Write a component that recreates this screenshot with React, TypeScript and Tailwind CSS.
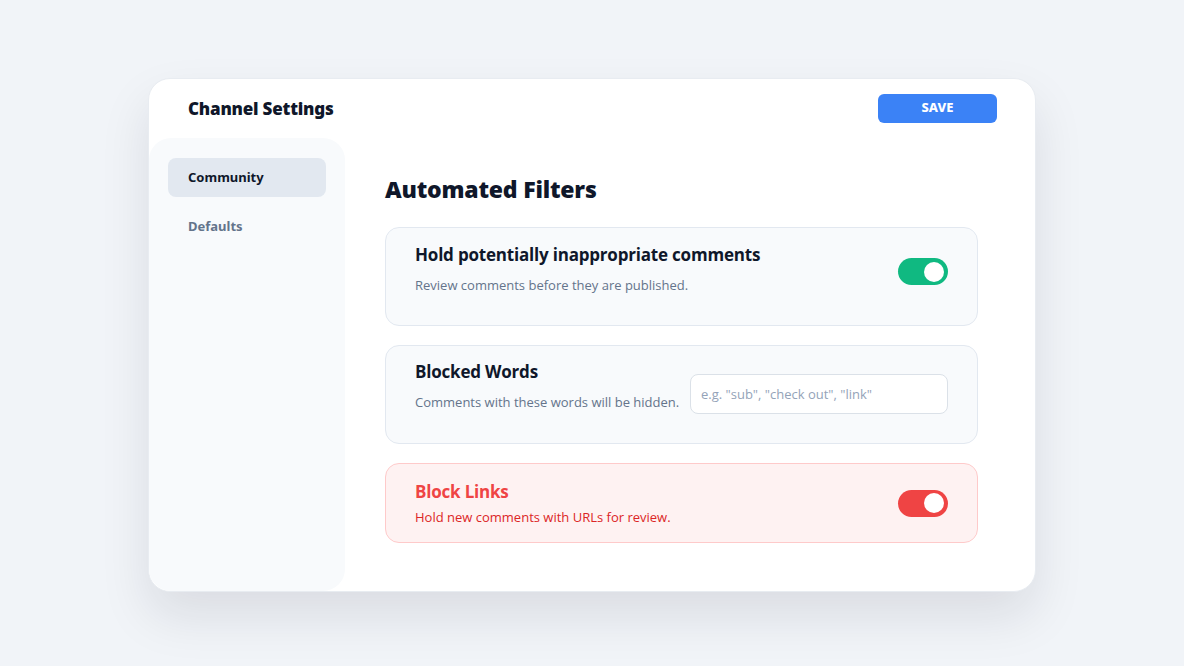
import React from "react";

const BODY = { fontFamily: "'Open Sans', 'Noto Sans', sans-serif" };
const HEAD = { fontFamily: "'Noto Sans', 'Open Sans', sans-serif" };

function Toggle({ color }: { color: string }) {
  return (
    <div className={`flex h-[27px] w-[50px] shrink-0 items-center justify-end rounded-full px-[4px] ${color}`}>
      <div className="h-[20px] w-[20px] rounded-full bg-white" />
    </div>
  );
}

export default function App() {
  return (
    <div className="flex h-[666px] w-full items-start justify-center bg-[#f1f4f8] pt-[78px]" style={BODY}>
      <div className="flex h-[514px] w-[888px] flex-col overflow-hidden rounded-[22px] border border-[#e8ecf1] bg-white shadow-[0_24px_50px_rgba(15,23,42,0.10)]">
        {/* header */}
        <div className="flex h-[59px] shrink-0 items-center justify-between pl-[39px] pr-[38px]">
          <div className="text-[17px] font-black tracking-[-0.2px] text-[#0f172a]" style={HEAD}>Channel Settings</div>
          <button className="mt-[-1px] h-[29px] w-[119px] rounded-[6px] bg-[#3b82f6] text-[13px] font-extrabold text-white" style={HEAD}>
            SAVE
          </button>
        </div>
        <div className="flex min-h-0 flex-1">
          {/* sidebar */}
          <div className="flex w-[196px] shrink-0 flex-col gap-[10px] rounded-[22px] bg-[#f8fafc] px-[19px] pt-[20px]">
            <div className="flex h-[39px] items-center rounded-[8px] bg-[#e2e8f0] px-[20px] text-[13px] font-bold text-[#0f172a]" style={HEAD}>
              Community
            </div>
            <div className="flex h-[39px] items-center rounded-[8px] px-[20px] text-[13px] font-bold text-[#64748b]" style={HEAD}>
              Defaults
            </div>
          </div>
          {/* main */}
          <div className="flex flex-col pl-[40px] pt-[36px]">
            <h1 className="text-[23px] font-black leading-[30px] tracking-[-0.2px] text-[#0f172a]" style={HEAD}>Automated Filters</h1>
            <div className="mt-[23px] flex w-[593px] flex-col gap-[19px]">
              <div className="flex h-[99px] items-start justify-between rounded-[14px] border border-[#e2e8f0] bg-[#f8fafc] pl-[29px] pr-[29px] pt-[15px]">
                <div className="flex flex-col">
                  <div className="text-[17px] font-bold leading-[24px] tracking-[-0.2px] text-[#0f172a]">Hold potentially inappropriate comments</div>
                  <div className="mt-[8px] text-[13px] leading-[20px] text-[#64748b]">Review comments before they are published.</div>
                </div>
                <div className="mt-[15px]">
                  <Toggle color="bg-[#10b981]" />
                </div>
              </div>
              <div className="flex h-[99px] items-start justify-between rounded-[14px] border border-[#e2e8f0] bg-[#f8fafc] pl-[29px] pr-[29px] pt-[14px]">
                <div className="flex flex-col">
                  <div className="text-[17px] font-bold leading-[24px] tracking-[-0.2px] text-[#0f172a]">Blocked Words</div>
                  <div className="mt-[8px] text-[13px] leading-[20px] text-[#64748b]">Comments with these words will be hidden.</div>
                </div>
                <input
                  className="mt-[14px] h-[40px] w-[258px] rounded-[8px] border border-[#dbe1e8] bg-white px-[10px] text-[13px] text-[#0f172a] outline-none placeholder:text-[#94a3b8]"
                  placeholder={'e.g. "sub", "check out", "link"'}
                  style={BODY}
                />
              </div>
              <div className="flex h-[80px] items-center justify-between rounded-[14px] border border-[#fecaca] bg-[#fef2f2] pl-[29px] pr-[29px]">
                <div className="flex flex-col">
                  <div className="text-[17px] font-bold leading-[24px] tracking-[-0.2px] text-[#ef4444]">Block Links</div>
                  <div className="mt-[3px] text-[13px] leading-[20px] text-[#dc2626]">Hold new comments with URLs for review.</div>
                </div>
                <Toggle color="bg-[#ef4444]" />
              </div>
            </div>
          </div>
        </div>
      </div>
    </div>
  );
}
